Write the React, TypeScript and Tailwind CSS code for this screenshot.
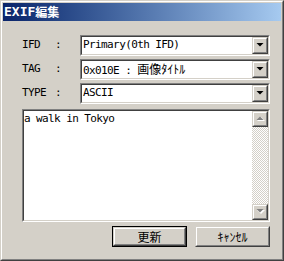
import React from "react";

const mono = "font-['DejaVu_Sans_Mono','Noto_Sans_CJK_JP',monospace] text-[11px] tracking-[-0.6px] text-black";
const jp = "font-['Noto_Sans_CJK_JP',sans-serif] text-[12px] tracking-normal";

function Raised({ children, className = "" }: { children?: React.ReactNode; className?: string }) {
  return (
    <div className={`border border-t-[#d4d0c8] border-l-[#d4d0c8] border-r-[#404040] border-b-[#404040] ${className}`}>
      <div className="flex h-full w-full items-center justify-center border border-t-white border-l-white border-r-[#808080] border-b-[#808080] bg-[#d4d0c8]">
        {children}
      </div>
    </div>
  );
}

function Sunken({ children, className = "" }: { children?: React.ReactNode; className?: string }) {
  return (
    <div className={`border border-t-[#808080] border-l-[#808080] border-r-white border-b-white ${className}`}>
      <div className="flex h-full w-full border border-t-[#404040] border-l-[#404040] border-r-[#d4d0c8] border-b-[#d4d0c8] bg-white">
        {children}
      </div>
    </div>
  );
}

function Arrow({ up = false, disabled = false }: { up?: boolean; disabled?: boolean }) {
  const pts = up ? "0,4 4,0 8,4" : "0,0 8,0 4,4";
  return (
    <svg width="9" height="6" viewBox="0 0 9 6">
      {disabled && <polygon points={pts} transform="translate(1,1)" fill="#ffffff" />}
      <polygon points={up ? "0.5,4 4,0.5 7.5,4" : "0.5,0 7.5,0 4,3.5"} fill={disabled ? "#808080" : "#000000"} />
    </svg>
  );
}

function Combo({ children }: { children: React.ReactNode }) {
  return (
    <Sunken className="h-[21px] w-[190px]">
      <div className={`flex flex-1 items-center pl-[1px] ${mono}`}>
        <span className="whitespace-pre">{children}</span>
      </div>
      <Raised className="h-[17px] w-[16px]">
        <Arrow />
      </Raised>
    </Sunken>
  );
}

function Row({ label, children }: { label: string; children: React.ReactNode }) {
  return (
    <div className="flex items-center">
      <span className={`w-[33px] ${mono}`}>{label}</span>
      <span className={`w-[25px] ${mono}`}>:</span>
      <Combo>{children}</Combo>
    </div>
  );
}

export default function App() {
  return (
    <div className="h-[261px] w-[284px] border border-t-[#d4d0c8] border-l-[#d4d0c8] border-r-[#404040] border-b-[#404040]">
      <div className="flex h-full flex-col border border-t-white border-l-white border-r-[#808080] border-b-[#808080] bg-[#d4d0c8] p-[1px]">
        <div className="flex h-[18px] items-center bg-gradient-to-r from-[#0a246a] to-[#a6caf0] pl-[1px] text-white">
          <span className="font-['DejaVu_Sans_Mono',monospace] text-[13px] font-bold">EXIF</span>
          <span className="font-['Noto_Sans_CJK_JP',sans-serif] text-[12px] font-bold">編集</span>
        </div>
        <div className="flex flex-col pt-[14px] pl-[19px]">
          <div className="flex flex-col gap-[3px]">
            <Row label="IFD">Primary(0th IFD)</Row>
            <Row label="TAG">
              {"0x010E : "}
              <span className={jp}>画像ﾀｲﾄﾙ</span>
            </Row>
            <Row label="TYPE">ASCII</Row>
          </div>
          <Sunken className="mt-[5px] h-[113px] w-[248px]">
            <div className={`flex-1 pt-[1px] leading-[14px] ${mono}`}>a walk in Tokyo</div>
            <div className="flex w-[16px] flex-col">
              <Raised className="h-[16px] w-[16px]">
                <Arrow up disabled />
              </Raised>
              <div className="flex-1 bg-[repeating-conic-gradient(#d4d0c8_0%_25%,#ffffff_0%_50%)] bg-[length:2px_2px]" />
              <Raised className="h-[16px] w-[16px]">
                <Arrow disabled />
              </Raised>
            </div>
          </Sunken>
          <div className="mt-[4px] flex w-[248px] justify-end gap-[8px]">
            <div className="h-[21px] w-[75px] border border-black">
              <Raised className="h-full w-full">
                <span className={jp}>更新</span>
              </Raised>
            </div>
            <Raised className="h-[21px] w-[75px]">
              <span className={jp}>ｷｬﾝｾﾙ</span>
            </Raised>
          </div>
        </div>
      </div>
    </div>
  );
}
